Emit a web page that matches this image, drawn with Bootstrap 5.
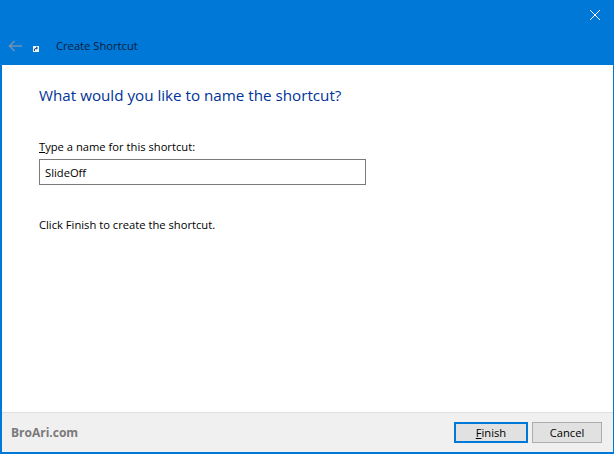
<!DOCTYPE html>
<html lang="en">
  <head>
    <meta charset="UTF-8" />
    <meta name="viewport" content="width=device-width, initial-scale=1.0" />
    <title>Create Shortcut</title>
    <link
      href="https://cdn.jsdelivr.net/npm/bootstrap@5.3.0/dist/css/bootstrap.min.css"
      rel="stylesheet"
    />
    <style>
      html, body { height: 100%; }
      body {
        font-family: "Open Sans", "Noto Sans", "Liberation Sans", sans-serif;
        font-size: 11.2px;
        color: #000;
        overflow: hidden;
      }
      .wiz-window {
        height: 454px;
        border: solid #0078d7;
        border-width: 0 1px 2px 2px;
      }
      .wiz-header {
        height: 65px;
        margin: 0 -1px 0 -2px;
        background: #0078d7;
        padding-bottom: 9px;
      }
      .wiz-close { margin: 10px 14px 0 0; }
      .wiz-title { font-size: 11.2px; color: #0a1c3a; line-height: 20px; }
      .wiz-back { margin: 0 11px 0 8px; }
      .wiz-appicon { margin: 6px 17px 0 0; }
      .wiz-body { padding: 19px 37px 0; }
      .wiz-heading {
        font-size: 15.2px;
        font-weight: 400;
        color: #003399;
        line-height: 22px;
        margin: 0 0 33px;
      }
      .wiz-label { display: block; line-height: 16px; margin-bottom: 4px; }
      .wiz-input {
        display: block;
        width: 327px;
        height: 26px;
        border: 1px solid #7a7a7a;
        padding: 0 5px;
        font-size: 11.2px;
        color: #000;
        border-radius: 0;
        outline: none;
      }
      .wiz-hint { line-height: 16px; margin: 32px 0 0; }
      .wiz-footer {
        height: 40px;
        background: #f0f0f0;
        border-top: 1px solid #dfdfdf;
        padding: 0 11px 0 9px;
      }
      .wiz-brand { font-size: 12px; font-weight: 700; color: #7a7a7a; }
      .wiz-btn {
        height: 21px;
        padding: 0;
        border-radius: 0;
        background: #e1e1e1;
        border: 1px solid #adadad;
        font-size: 11.2px;
        line-height: 17px;
        color: #000;
      }
      .wiz-btn-finish { width: 74px; border: 2px solid #0078d7; }
      .wiz-btn-cancel { width: 70px; }
    </style>
  </head>
  <body>
    <div class="wiz-window d-flex flex-column">
      <div class="wiz-header d-flex flex-column justify-content-between">
        <div class="d-flex justify-content-end">
          <svg class="wiz-close" width="10" height="10" viewBox="0 0 10 10">
            <path d="M0 0L10 10M10 0L0 10" stroke="#fff" stroke-width="1" fill="none" />
          </svg>
        </div>
        <div class="d-flex align-items-center">
          <svg class="wiz-back" width="14" height="12" viewBox="0 0 14 12">
            <path d="M6.5 1L1.5 6L6.5 11M1.5 6H14" stroke="#6f92b5" stroke-width="1.6" fill="none" />
          </svg>
          <svg class="wiz-appicon" width="6" height="6" viewBox="0 0 6 6">
            <rect width="6" height="6" fill="#eef4fa" />
            <path d="M1.5 5V3L4 2M3 1L4.5 2L3 3.2" stroke="#1d3f78" stroke-width="1" fill="none" />
          </svg>
          <span class="wiz-title">Create Shortcut</span>
        </div>
      </div>

      <div class="wiz-body flex-grow-1 bg-white">
        <h1 class="wiz-heading">What would you like to name the shortcut?</h1>
        <label class="wiz-label" for="shortcutName"><u>T</u>ype a name for this shortcut:</label>
        <input class="wiz-input" id="shortcutName" type="text" value="SlideOff" />
        <p class="wiz-hint">Click Finish to create the shortcut.</p>
      </div>

      <div class="wiz-footer d-flex align-items-center">
        <span class="wiz-brand me-auto">BroAri.com</span>
        <button type="button" class="btn wiz-btn wiz-btn-finish me-1"><u>F</u>inish</button>
        <button type="button" class="btn wiz-btn wiz-btn-cancel">Cancel</button>
      </div>
    </div>
    <script src="https://cdn.jsdelivr.net/npm/bootstrap@5.3.0/dist/js/bootstrap.bundle.min.js"></script>
  </body>
</html>
